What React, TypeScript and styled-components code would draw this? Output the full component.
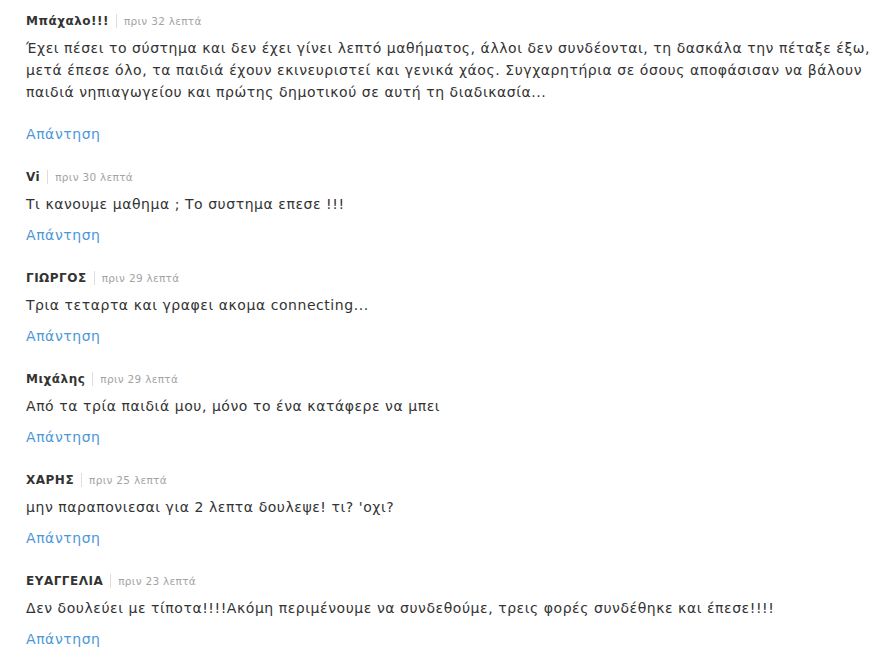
import React from "react";
import styled, { createGlobalStyle } from "styled-components";

const Global = createGlobalStyle`
  html, body { margin: 0; padding: 0; background: #ffffff; }
  body { font-family: "DejaVu Sans", "Liberation Sans", Arial, sans-serif; }
`;

const List = styled.section`
  display: flex;
  flex-direction: column;
  padding: 13px 2px 0 26px;
  width: 880px;
  box-sizing: border-box;
`;

const Item = styled.article`
  display: flex;
  flex-direction: column;
  padding-bottom: 25px;
`;

const Meta = styled.header`
  display: flex;
  align-items: center;
  height: 16px;
`;

const Author = styled.span`
  font-size: 12px;
  font-weight: 700;
  color: #333333;
  letter-spacing: 0.5px;
`;

const Sep = styled.span`
  width: 1px;
  height: 14px;
  background: #dddddd;
  margin: 0 7px;
`;

const Time = styled.span`
  font-size: 10.5px;
  color: #a3a3a3;
  letter-spacing: 0.3px;
`;

const Body = styled.p<{ $extra?: number }>`
  margin: 8px 0 ${(p) => p.$extra ?? 0}px 0;
  font-size: 14px;
  line-height: 22px;
  letter-spacing: 0.55px;
  color: #333333;
`;

const Reply = styled.a`
  margin-top: 10px;
  font-size: 14px;
  line-height: 20px;
  letter-spacing: 0.55px;
  color: #4b98da;
  text-decoration: none;
  cursor: pointer;
  align-self: flex-start;
`;

type C = { name: string; time: string; text: string; extra?: number };

const comments: C[] = [
  {
    name: "Μπάχαλο!!!",
    time: "πριν 32 λεπτά",
    text:
      "Έχει πέσει το σύστημα και δεν έχει γίνει λεπτό μαθήματος, άλλοι δεν συνδέονται, τη δασκάλα την πέταξε έξω, μετά έπεσε όλο, τα παιδιά έχουν εκινευριστεί και γενικά χάος. Συγχαρητήρια σε όσους αποφάσισαν να βάλουν παιδιά νηπιαγωγείου και πρώτης δημοτικού σε αυτή τη διαδικασία...",
    extra: 11,
  },
  { name: "Vi", time: "πριν 30 λεπτά", text: "Τι κανουμε μαθημα ; Το συστημα επεσε !!!" },
  { name: "ΓΙΩΡΓΟΣ", time: "πριν 29 λεπτά", text: "Τρια τεταρτα και γραφει ακομα connecting..." },
  { name: "Μιχάλης", time: "πριν 29 λεπτά", text: "Από τα τρία παιδιά μου, μόνο το ένα κατάφερε να μπει" },
  { name: "ΧΑΡΗΣ", time: "πριν 25 λεπτά", text: "μην παραπονιεσαι για 2 λεπτα δουλεψε! τι? 'οχι?" },
  {
    name: "ΕΥΑΓΓΕΛΙΑ",
    time: "πριν 23 λεπτά",
    text: "Δεν δουλεύει με τίποτα!!!!Ακόμη περιμένουμε να συνδεθούμε, τρεις φορές συνδέθηκε και έπεσε!!!!",
  },
];

export default function App() {
  return (
    <>
      <Global />
      <List>
        {comments.map((c) => (
          <Item key={c.name}>
            <Meta>
              <Author>{c.name}</Author>
              <Sep />
              <Time>{c.time}</Time>
            </Meta>
            <Body $extra={c.extra}>{c.text}</Body>
            <Reply>Απάντηση</Reply>
          </Item>
        ))}
      </List>
    </>
  );
}
